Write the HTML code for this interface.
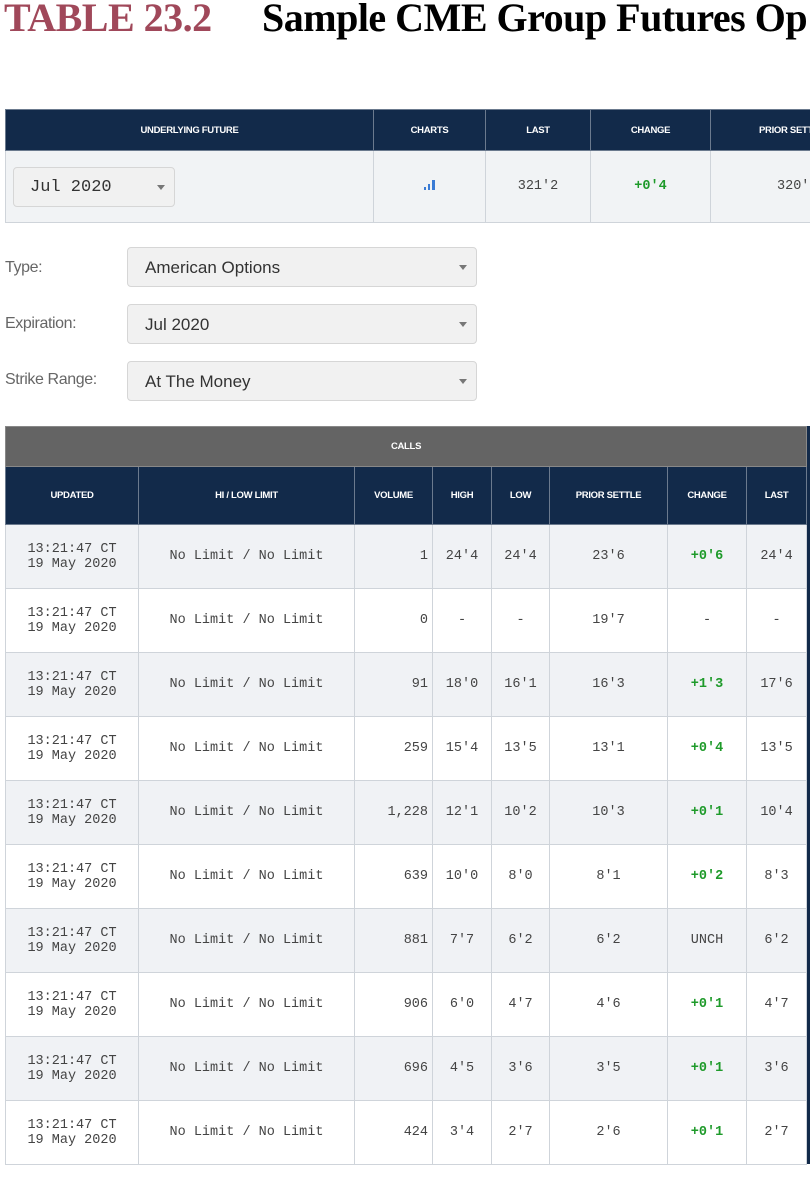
<!DOCTYPE html>
<html><head><meta charset="utf-8"><style>
*{margin:0;padding:0;box-sizing:border-box}
body{width:810px;height:1186px;background:#fff;position:relative;overflow:hidden;font-family:"Liberation Sans",sans-serif}
.title{position:absolute;left:4px;top:-6px;font-family:"Liberation Serif",serif;font-weight:bold;font-size:40px;white-space:nowrap;letter-spacing:-0.5px}
.title .t{color:#a0485a}
.title .s{position:absolute;left:258px;color:#000}
table{border-collapse:collapse;position:absolute;table-layout:fixed}
td,th{border:1px solid #cfd4da;text-align:center;overflow:hidden;white-space:nowrap}
th{background:#122a4a;color:#fff;font-size:9.5px;font-weight:bold;border-color:#6b7a8e;letter-spacing:-0.3px}
.mono{font-family:"Liberation Mono",monospace;font-size:13.5px;color:#444}
.g{color:#1e9a2a;font-weight:bold}
.sel{position:absolute;background:#f1f1f1;border:1px solid #d6d6d6;border-radius:4px;font-size:17px;color:#333}
.sel:after{content:"";position:absolute;right:9px;top:50%;margin-top:-2px;border-left:4px solid transparent;border-right:4px solid transparent;border-top:5px solid #777}
.lbl{position:absolute;left:5px;font-size:16px;color:#666;letter-spacing:-0.4px}
</style></head><body>
<div class="title"><span class="t">TABLE 23.2</span><span class="s">Sample CME Group Futures Op</span></div>

<table style="left:5px;top:109px;width:820px">
<colgroup><col style="width:368px"><col style="width:112px"><col style="width:105px"><col style="width:120px"><col style="width:115px"></colgroup>
<tr style="height:41px"><th>UNDERLYING FUTURE</th><th>CHARTS</th><th>LAST</th><th>CHANGE</th><th style="text-align:left;padding-left:48px">PRIOR SETTLE</th></tr>
<tr style="height:72px;background:#f1f3f5" class="mono"><td style="position:relative;text-align:left">
<div class="sel" style="left:7px;top:16px;width:162px;height:40px;font-family:'Liberation Mono',monospace;font-size:17px;padding:10px 0 0 16px;color:#333">Jul 2020</div></td>
<td><svg width="14" height="12" viewBox="0 0 14 12"><rect x="1" y="9" width="2" height="3" fill="#3a7bd5"/><rect x="5" y="6" width="2" height="6" fill="#3a7bd5"/><rect x="9" y="2" width="3" height="10" fill="#3a7bd5"/></svg></td>
<td>321'2</td><td class="g">+0'4</td><td style="text-align:left;padding-left:66px">320'6</td></tr>
</table>

<div class="lbl" style="top:259px">Type:</div>
<div class="lbl" style="top:315px">Expiration:</div>
<div class="lbl" style="top:371px">Strike Range:</div>
<div class="sel" style="left:127px;top:247px;width:350px;height:40px;padding:10px 0 0 17px">American Options</div>
<div class="sel" style="left:127px;top:304px;width:350px;height:40px;padding:10px 0 0 17px">Jul 2020</div>
<div class="sel" style="left:127px;top:361px;width:350px;height:40px;padding:10px 0 0 17px">At The Money</div>

<div style="position:absolute;left:806px;top:426px;width:4px;height:738px;background:#122a4a"></div>
<table style="left:5px;top:426px;width:801px">
<colgroup><col style="width:133px"><col style="width:216px"><col style="width:78px"><col style="width:59px"><col style="width:58px"><col style="width:118px"><col style="width:79px"><col style="width:60px"></colgroup>
<tr style="height:40px"><th colspan="8" style="background:#646464;border-color:#888">CALLS</th></tr>
<tr style="height:58px"><th>UPDATED</th><th>HI / LOW LIMIT</th><th>VOLUME</th><th>HIGH</th><th>LOW</th><th>PRIOR SETTLE</th><th>CHANGE</th><th>LAST</th></tr>
<tbody class="mono">
<tr style="height:64px;background:#f0f2f5"><td style="line-height:15px">13:21:47 CT<br>19 May 2020</td><td>No Limit / No Limit</td><td style="text-align:right;padding-right:4px">1</td><td>24'4</td><td>24'4</td><td>23'6</td><td class="g">+0'6</td><td>24'4</td></tr>
<tr style="height:64px"><td style="line-height:15px">13:21:47 CT<br>19 May 2020</td><td>No Limit / No Limit</td><td style="text-align:right;padding-right:4px">0</td><td>-</td><td>-</td><td>19'7</td><td>-</td><td>-</td></tr>
<tr style="height:64px;background:#f0f2f5"><td style="line-height:15px">13:21:47 CT<br>19 May 2020</td><td>No Limit / No Limit</td><td style="text-align:right;padding-right:4px">91</td><td>18'0</td><td>16'1</td><td>16'3</td><td class="g">+1'3</td><td>17'6</td></tr>
<tr style="height:64px"><td style="line-height:15px">13:21:47 CT<br>19 May 2020</td><td>No Limit / No Limit</td><td style="text-align:right;padding-right:4px">259</td><td>15'4</td><td>13'5</td><td>13'1</td><td class="g">+0'4</td><td>13'5</td></tr>
<tr style="height:64px;background:#f0f2f5"><td style="line-height:15px">13:21:47 CT<br>19 May 2020</td><td>No Limit / No Limit</td><td style="text-align:right;padding-right:4px">1,228</td><td>12'1</td><td>10'2</td><td>10'3</td><td class="g">+0'1</td><td>10'4</td></tr>
<tr style="height:64px"><td style="line-height:15px">13:21:47 CT<br>19 May 2020</td><td>No Limit / No Limit</td><td style="text-align:right;padding-right:4px">639</td><td>10'0</td><td>8'0</td><td>8'1</td><td class="g">+0'2</td><td>8'3</td></tr>
<tr style="height:64px;background:#f0f2f5"><td style="line-height:15px">13:21:47 CT<br>19 May 2020</td><td>No Limit / No Limit</td><td style="text-align:right;padding-right:4px">881</td><td>7'7</td><td>6'2</td><td>6'2</td><td>UNCH</td><td>6'2</td></tr>
<tr style="height:64px"><td style="line-height:15px">13:21:47 CT<br>19 May 2020</td><td>No Limit / No Limit</td><td style="text-align:right;padding-right:4px">906</td><td>6'0</td><td>4'7</td><td>4'6</td><td class="g">+0'1</td><td>4'7</td></tr>
<tr style="height:64px;background:#f0f2f5"><td style="line-height:15px">13:21:47 CT<br>19 May 2020</td><td>No Limit / No Limit</td><td style="text-align:right;padding-right:4px">696</td><td>4'5</td><td>3'6</td><td>3'5</td><td class="g">+0'1</td><td>3'6</td></tr>
<tr style="height:64px"><td style="line-height:15px">13:21:47 CT<br>19 May 2020</td><td>No Limit / No Limit</td><td style="text-align:right;padding-right:4px">424</td><td>3'4</td><td>2'7</td><td>2'6</td><td class="g">+0'1</td><td>2'7</td></tr>
</tbody></table>
</body></html>
